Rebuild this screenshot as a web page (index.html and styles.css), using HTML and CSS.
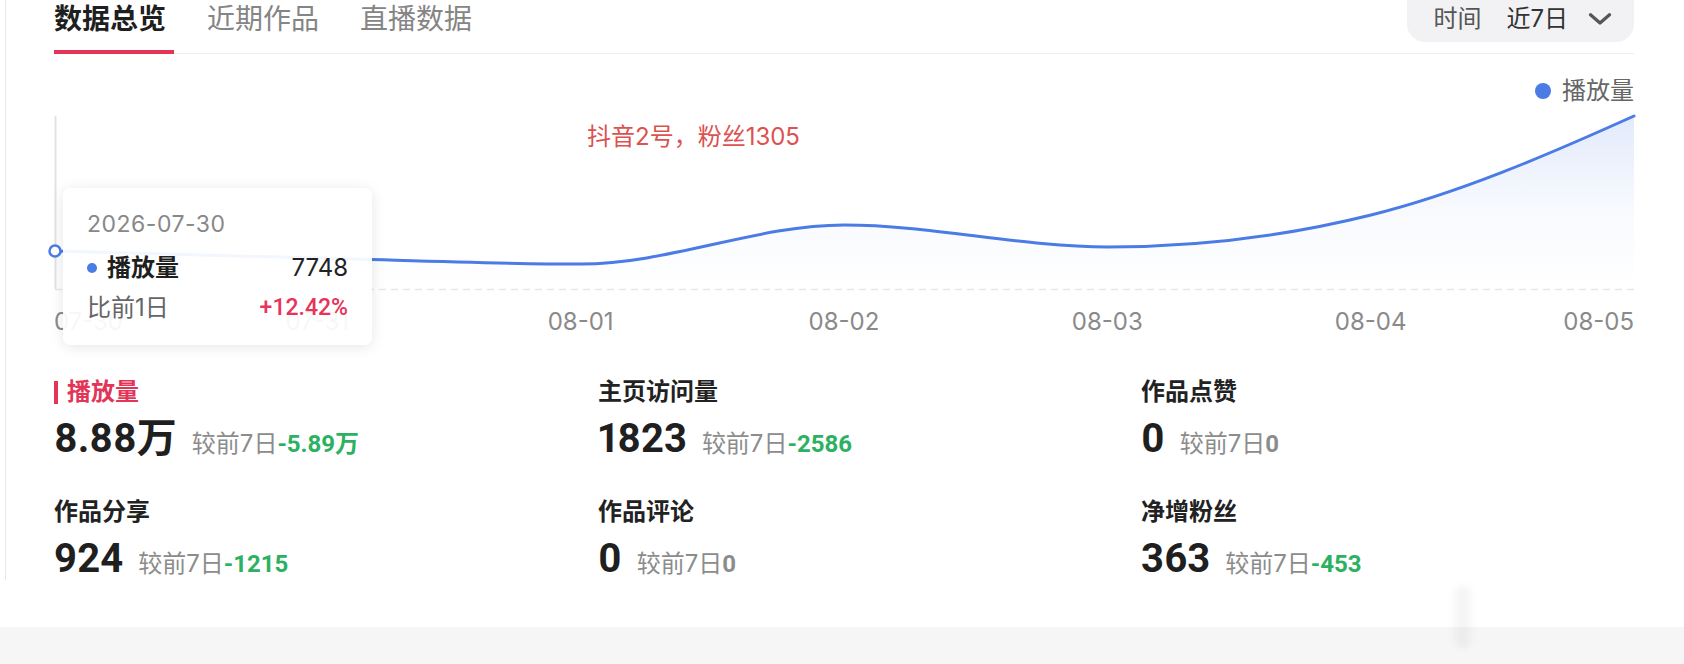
FILE: index.html
```html
<!DOCTYPE html>
<html lang="zh-CN">
<head>
<meta charset="utf-8">
<title>数据总览</title>
<link rel="stylesheet" href="styles.css">
</head>
<body>
<div class="page">
  <div class="card">
    <div class="header">
      <div class="tabs">
        <div class="tab active">数据总览</div>
        <div class="tab">近期作品</div>
        <div class="tab">直播数据</div>
      </div>
      <div class="range">
        <span class="range-label">时间</span>
        <span class="range-value">近7日</span>
        <svg class="chev" viewBox="0 0 24 12" width="24" height="12"><path d="M2.5 1.8 L12 10 L21.5 1.8" fill="none" stroke="#555" stroke-width="3.2" stroke-linecap="round" stroke-linejoin="round"/></svg>
      </div>
    </div>

    <div class="chart">
      <div class="legend"><span class="legend-dot"></span><span>播放量</span></div>
      <svg class="plot" width="1580" height="184" viewBox="0 0 1580 184">
        <defs>
          <linearGradient id="areaFill" x1="0" y1="0" x2="0" y2="1">
            <stop offset="0" stop-color="#4b7be5" stop-opacity="0.16"/>
            <stop offset="0.55" stop-color="#4b7be5" stop-opacity="0.04"/>
            <stop offset="1" stop-color="#4b7be5" stop-opacity="0"/>
          </linearGradient>
        </defs>
        <line x1="1.5" y1="10" x2="1.5" y2="183" stroke="#e2e2e2" stroke-width="2"/>
        <line x1="1" y1="183.5" x2="1580" y2="183.5" stroke="#e8e8e8" stroke-width="1.5" stroke-dasharray="7 5"/>
        <path d="M1,145 C88.7,147.4 176.3,149.8 264,152 C351.7,154.2 439.3,158 527,158 C614.7,158 702.3,119 790,119 C877.7,119 966.3,141 1054,141 C1141.7,141 1229.3,130.8 1317,109 C1404.7,87.2 1492.3,49.5 1580,10 L1580,183 L1,183 Z" fill="url(#areaFill)"/>
        <path d="M1,145 C88.7,147.4 176.3,149.8 264,152 C351.7,154.2 439.3,158 527,158 C614.7,158 702.3,119 790,119 C877.7,119 966.3,141 1054,141 C1141.7,141 1229.3,130.8 1317,109 C1404.7,87.2 1492.3,49.5 1580,10" fill="none" stroke="#4b7be5" stroke-width="3" stroke-linecap="round"/>
        <circle cx="1" cy="145" r="5.5" fill="#fff" stroke="#4b7be5" stroke-width="2.5"/>
      </svg>
      <div class="xaxis">
        <span class="first">07-30</span>
        <span>07-31</span>
        <span>08-01</span>
        <span>08-02</span>
        <span>08-03</span>
        <span>08-04</span>
        <span class="last">08-05</span>
      </div>
      <div class="chart-title">抖音2号，粉丝1305</div>
      <div class="tooltip">
        <div class="tt-date">2026-07-30</div>
        <div class="tt-row main">
          <span class="tt-name"><span class="tt-dot"></span>播放量</span>
          <span class="tt-val">7748</span>
        </div>
        <div class="tt-row cmp-row">
          <span class="tt-cmp-label">比前1日</span>
          <span class="tt-up">+12.42%</span>
        </div>
      </div>
    </div>

    <div class="stats">
      <div class="stat">
        <div class="stat-label active"><span class="bar"></span>播放量</div>
        <div class="stat-value"><span class="num">8.88万</span><span class="cmp">较前7日<span class="delta">-5.89万</span></span></div>
      </div>
      <div class="stat">
        <div class="stat-label">主页访问量</div>
        <div class="stat-value"><span class="num">1823</span><span class="cmp">较前7日<span class="delta">-2586</span></span></div>
      </div>
      <div class="stat">
        <div class="stat-label">作品点赞</div>
        <div class="stat-value"><span class="num">0</span><span class="cmp">较前7日<span class="delta zero">0</span></span></div>
      </div>
      <div class="stat">
        <div class="stat-label">作品分享</div>
        <div class="stat-value"><span class="num">924</span><span class="cmp">较前7日<span class="delta">-1215</span></span></div>
      </div>
      <div class="stat">
        <div class="stat-label">作品评论</div>
        <div class="stat-value"><span class="num">0</span><span class="cmp">较前7日<span class="delta zero">0</span></span></div>
      </div>
      <div class="stat">
        <div class="stat-label">净增粉丝</div>
        <div class="stat-value"><span class="num">363</span><span class="cmp">较前7日<span class="delta">-453</span></span></div>
      </div>
    </div>
  </div>
</div>
<div class="smudge"></div>
</body>
</html>
```

FILE: styles.css
```css
html, body {
  margin: 0;
  padding: 0;
}

body {
  position: relative;
  background: #f6f6f6;
  font-family: "Inter", "Noto Sans CJK SC", sans-serif;
  color: #222;
  overflow: hidden;
  height: 664px;
}

.page {
  background: #fff;
  height: 627px;
  padding-left: 5px;
  box-sizing: border-box;
}

.card {
  border-left: 1px solid #e8e8e8;
  height: 580px;
  width: 1580px;
  padding-left: 48px;
}

/* header / tabs */
.header {
  display: flex;
  justify-content: space-between;
  align-items: flex-start;
  height: 53px;
  border-bottom: 1px solid #efefef;
}

.tabs {
  display: flex;
  gap: 33px;
}

.tab {
  box-sizing: border-box;
  height: 54px;
  padding: 5px 8px 0 0;
  border-bottom: 4px solid transparent;
  font-size: 28px;
  line-height: 28px;
  color: #858585;
  white-space: nowrap;
}

.tab.active {
  color: #1f1f1f;
  font-weight: 700;
  border-bottom-color: #e33558;
}

.range {
  display: flex;
  align-items: center;
  height: 38px;
  margin-top: -20px;
  padding: 20px 22px 4px 26px;
  background: #f2f2f4;
  border-radius: 18px;
  font-size: 24px;
  line-height: 24px;
}

.range-label {
  color: #555;
  margin-right: 25px;
}

.range-value {
  color: #333;
  margin-right: 20px;
}

.chev {
  display: block;
}

/* chart */
.chart {
  position: relative;
}

.legend {
  display: flex;
  justify-content: flex-end;
  align-items: center;
  gap: 11px;
  padding-top: 25px;
  font-size: 24px;
  line-height: 24px;
  color: #666;
}

.legend-dot {
  width: 16px;
  height: 16px;
  border-radius: 50%;
  background: #4b7be5;
}

.plot {
  display: block;
  margin-top: 3px;
  overflow: visible;
}

.xaxis {
  display: grid;
  grid-template-columns: 1fr 2fr 2fr 2fr 2fr 2fr 1fr;
  margin-top: 20px;
  font-size: 24px;
  line-height: 24px;
  color: #8a8a8a;
}

.xaxis span {
  text-align: center;
  white-space: nowrap;
}

.xaxis .first {
  text-align: left;
}

.xaxis .last {
  text-align: right;
}

.chart-title {
  position: absolute;
  left: 533px;
  top: 71px;
  font-size: 24px;
  line-height: 24px;
  color: #db5250;
  white-space: nowrap;
}

.tooltip {
  position: absolute;
  left: 9px;
  top: 134px;
  width: 309px;
  height: 157px;
  box-sizing: border-box;
  padding: 24px 24px 0;
  background: rgba(255, 255, 255, 0.93);
  border-radius: 8px;
  box-shadow: 0 2px 14px rgba(0, 0, 0, 0.1);
}

.tt-date {
  font-size: 23px;
  line-height: 24px;
  color: #888;
  letter-spacing: 0.5px;
}

.tt-row {
  display: flex;
  justify-content: space-between;
  align-items: center;
  font-size: 24px;
  line-height: 24px;
}

.tt-row.main {
  margin-top: 20px;
}

.tt-row.cmp-row {
  margin-top: 16px;
}

.tt-name {
  display: flex;
  align-items: center;
  gap: 10px;
  font-weight: 700;
  color: #1f1f1f;
}

.tt-dot {
  width: 10px;
  height: 10px;
  border-radius: 50%;
  background: #4b7be5;
}

.tt-val {
  color: #222;
}

.tt-cmp-label {
  color: #666;
}

.tt-up {
  font-family: "Roboto", "Inter", sans-serif;
  font-size: 23px;
  color: #e8335a;
  font-weight: 500;
}

/* stats */
.stats {
  display: grid;
  grid-template-columns: 544px 543px 1fr;
  row-gap: 39px;
  margin-top: 46px;
}

.stat-label {
  display: flex;
  align-items: center;
  font-size: 24px;
  line-height: 24px;
  font-weight: 700;
  color: #222;
}

.stat-label.active {
  color: #e33558;
}

.bar {
  width: 4px;
  height: 23px;
  margin-right: 9px;
  background: #e33558;
}

.stat-value {
  display: flex;
  align-items: baseline;
  margin-top: 13px;
  line-height: 44px;
  white-space: nowrap;
}

.num {
  font-family: "Roboto", "Noto Sans CJK SC", sans-serif;
  font-variant-numeric: proportional-nums;
  font-weight: 700;
  font-size: 40px;
  color: #1f1f1f;
}

.cmp {
  margin-left: 15px;
  font-size: 24px;
  line-height: 24px;
  color: #8c8c8c;
}

.delta {
  font-family: "Roboto", "Noto Sans CJK SC", sans-serif;
  font-weight: 700;
  color: #2bb161;
}

.delta.zero {
  color: #8c8c8c;
}

.smudge {
  position: absolute;
  left: 1450px;
  top: 586px;
  width: 26px;
  height: 62px;
  border-radius: 13px;
  background: linear-gradient(to right, rgba(0, 0, 0, 0), rgba(0, 0, 0, 0.05), rgba(0, 0, 0, 0));
  filter: blur(3px);
}
```
